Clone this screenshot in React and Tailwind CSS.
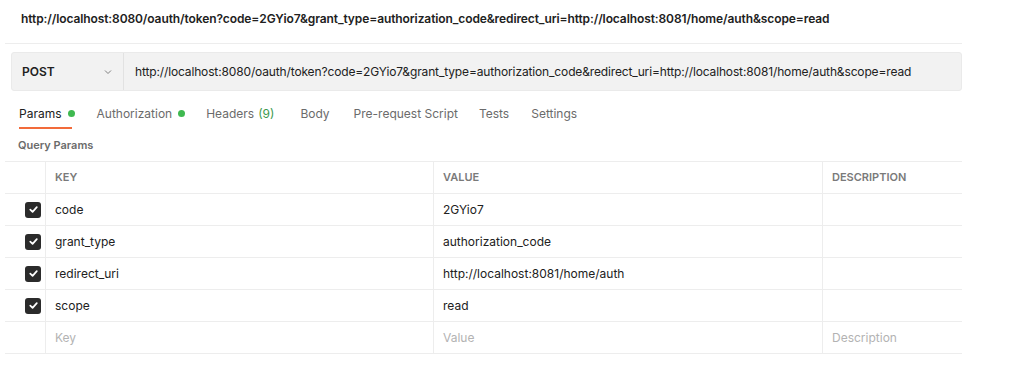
import React from "react";

const rows = [
  { key: "code", value: "2GYio7" },
  { key: "grant_type", value: "authorization_code" },
  { key: "redirect_uri", value: "http://localhost:8081/home/auth" },
  { key: "scope", value: "read" },
];

const URL =
  "http://localhost:8080/oauth/token?code=2GYio7&grant_type=authorization_code&redirect_uri=http://localhost:8081/home/auth&scope=read";

function Check() {
  return (
    <div className="w-[16px] h-[16px] rounded-[3px] bg-[#2b2b2b] flex items-center justify-center">
      <svg width="11" height="11" viewBox="0 0 12 12" fill="none">
        <path d="M2.5 6.2 L5 8.6 L9.6 3.4" stroke="white" strokeWidth="1.9" strokeLinecap="round" strokeLinejoin="round" />
      </svg>
    </div>
  );
}

function Dot() {
  return <span className="inline-block w-[7px] h-[7px] rounded-full bg-[#3fb950] ml-[6px]" />;
}

export default function App() {
  return (
    <div className="w-[1011px] h-[381px] bg-white overflow-hidden text-[12px] text-[#212121]" style={{ fontFamily: "Inter, 'Noto Sans', sans-serif" }}>
      <div className="ml-[5px] w-[957px] h-[44px] border-b border-[#ededed] flex items-center pl-[16px] pb-[6px]">
        <span className="font-semibold tracking-[-0.1px]">{URL}</span>
      </div>
      <div className="ml-[11px] mt-[8px] w-[951px] h-[39px] bg-[#f2f2f2] border border-[#eaeaea] rounded-[3px] flex items-center">
        <div className="w-[112px] h-full flex items-center justify-between pl-[10px] pr-[10px] border-r border-[#e2e2e2]">
          <span className="font-semibold">POST</span>
          <svg width="10" height="10" viewBox="0 0 10 10" fill="none">
            <path d="M2 3.5 L5 6.5 L8 3.5" stroke="#808080" strokeWidth="1" />
          </svg>
        </div>
        <span className="pl-[11px] tracking-[-0.14px]">{URL}</span>
      </div>
      <div className="ml-[19px] mt-[11px] flex items-start h-[28px] text-[#6b6b6b]">
        <div className="flex flex-col h-full">
          <div className="flex items-center h-[23px] text-[#212121]">
            Params
            <Dot />
          </div>
          <div className="mt-auto mb-[1px] h-[2px] w-[53px] bg-[#f26b3a]" />
        </div>
        <div className="flex items-center h-[23px] ml-[22px]">
          Authorization
          <Dot />
        </div>
        <div className="flex items-center h-[23px] ml-[21px]">
          Headers<span className="text-[#3c9a4e] ml-[4px]">(9)</span>
        </div>
        <div className="flex items-center h-[23px] ml-[26px]">Body</div>
        <div className="flex items-center h-[23px] ml-[24px]">Pre-request Script</div>
        <div className="flex items-center h-[23px] ml-[21px]">Tests</div>
        <div className="flex items-center h-[23px] ml-[22px]">Settings</div>
      </div>
      <div className="ml-[18px] h-[31px] flex items-center text-[11px] font-semibold text-[#6b6b6b]">Query Params</div>
      <div className="ml-[5px] w-[957px] border-t border-[#ededed]">
        <div className="grid grid-cols-[41px_388px_389px_139px] h-[32px] border-b border-[#ededed] text-[11px] font-semibold text-[#7a7a7a]">
          <div className="border-r border-[#ededed]" />
          <div className="border-r border-[#ededed] flex items-center pl-[9px]">KEY</div>
          <div className="border-r border-[#ededed] flex items-center pl-[9px]">VALUE</div>
          <div className="flex items-center pl-[9px]">DESCRIPTION</div>
        </div>
        {rows.map((r) => (
          <div key={r.key} className="grid grid-cols-[41px_388px_389px_139px] h-[32px] border-b border-[#ededed]">
            <div className="border-r border-[#ededed] flex items-center pl-[20px]">
              <Check />
            </div>
            <div className="border-r border-[#ededed] flex items-center pl-[9px]">{r.key}</div>
            <div className="border-r border-[#ededed] flex items-center pl-[9px]">{r.value}</div>
            <div />
          </div>
        ))}
        <div className="grid grid-cols-[41px_388px_389px_139px] h-[32px] border-b border-[#ededed] text-[#b3b3b3]">
          <div className="border-r border-[#ededed]" />
          <div className="border-r border-[#ededed] flex items-center pl-[9px]">Key</div>
          <div className="border-r border-[#ededed] flex items-center pl-[9px]">Value</div>
          <div className="flex items-center pl-[9px]">Description</div>
        </div>
      </div>
    </div>
  );
}
